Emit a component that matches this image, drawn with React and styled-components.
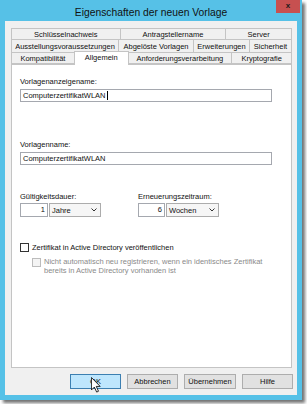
import styled, { createGlobalStyle } from "styled-components";

const GlobalStyle = createGlobalStyle`
  html, body {
    margin: 0;
    padding: 0;
    background: #ffffff;
  }
  body {
    font-family: "Liberation Sans", Arial, sans-serif;
    font-size: 7.5px;
    color: #111;
  }
`;

const Page = styled.div`
  width: 307px;
  height: 404px;
  background: #fff;
`;

const Window = styled.div`
  width: 302px;
  height: 400px;
  background: #56c1e7;
  display: flex;
  flex-direction: column;
  box-shadow: 3px 3px 3px rgba(0, 0, 0, 0.55);
`;

const TitleBar = styled.div`
  height: 21px;
  display: grid;
  grid-template-columns: 26px 1fr 26px;
  align-items: start;
`;

const Title = styled.div`
  grid-column: 2;
  text-align: center;
  font-size: 10.3px;
  line-height: 13px;
  padding-top: 6px;
  color: #111;
`;

const CloseButton = styled.div`
  grid-column: 3;
  width: 24px;
  height: 13px;
  background: #c75050;
  color: #1a1a1a;
  font-weight: bold;
  font-size: 8px;
  line-height: 12px;
  text-align: center;
`;

const Client = styled.div`
  flex: 1;
  margin: 0 5px 5px 5px;
  background: #f0f0f0;
  padding: 7px 5px 0 6px;
  display: flex;
  flex-direction: column;
`;

const TabRows = styled.div`
  display: flex;
  flex-direction: column;
`;

const TabRow = styled.div`
  display: flex;
  height: ${p => p.$h}px;
  align-items: flex-end;
`;

const Tab = styled.div`
  box-sizing: border-box;
  width: ${p => p.$w}px;
  height: ${p => (p.$active ? 14 : p.$h)}px;
  margin-bottom: ${p => (p.$active ? -1 : 0)}px;
  position: ${p => (p.$active ? "relative" : "static")};
  z-index: ${p => (p.$active ? 1 : 0)};
  border: 1px solid #c4c4c4;
  border-bottom: ${p => (p.$active ? "none" : "1px solid #c4c4c4")};
  margin-left: -1px;
  &:first-child { margin-left: 0; }
  background: ${p => (p.$active ? "#ffffff" : "#f0f0f0")};
  display: flex;
  align-items: ${p => (p.$active ? "flex-start" : "center")};
  padding-top: ${p => (p.$active ? 1 : 0)}px;
  justify-content: center;
  white-space: nowrap;
  font-size: 7.5px;
  color: #111;
`;

const Panel = styled.div`
  box-sizing: border-box;
  height: 304px;
  background: #fff;
  border: 1px solid #c4c4c4;
  padding: 12px 0 0 8px;
  display: flex;
  flex-direction: column;
`;

const Label = styled.div`
  line-height: 9px;
  margin-top: ${p => p.$mt || 0}px;
`;

const TextInput = styled.div`
  box-sizing: border-box;
  width: 252px;
  height: 13px;
  margin-top: 3px;
  border: 1px solid #a5a8af;
  background: #fff;
  padding-left: 2px;
  display: flex;
  align-items: center;
`;

const Caret = styled.span`
  display: inline-block;
  width: 1px;
  height: 9px;
  background: #000;
  margin-left: 1px;
`;

const Periods = styled.div`
  display: grid;
  grid-template-columns: 118px auto;
  margin-top: 27px;
`;

const PeriodGroup = styled.div`
  display: flex;
  flex-direction: column;
`;

const PeriodControls = styled.div`
  display: flex;
  gap: 1px;
  margin-top: 2px;
`;

const NumberBox = styled.div`
  box-sizing: border-box;
  width: ${p => p.$w}px;
  height: 14px;
  border: 1px solid #a5a8af;
  background: #fff;
  text-align: right;
  padding-right: 2px;
  line-height: 12px;
`;

const Combo = styled.div`
  box-sizing: border-box;
  width: ${p => p.$w}px;
  height: 14px;
  border: 1px solid #acacac;
  background: #f6f6f6;
  display: flex;
  align-items: center;
  justify-content: space-between;
  padding: 0 3px 0 2px;
`;

const CheckRow = styled.div`
  display: flex;
  align-items: flex-start;
  gap: 3px;
  margin-top: ${p => p.$mt}px;
  margin-left: ${p => p.$ml || 0}px;
  color: ${p => (p.$disabled ? "#8a8a8a" : "#111")};
  line-height: 9px;
`;

const Box = styled.div`
  box-sizing: border-box;
  flex: none;
  width: 9px;
  height: 9px;
  margin-top: ${p => (p.$disabled ? 1 : 0)}px;
  border: 1px solid ${p => (p.$disabled ? "#bcbcbc" : "#333")};
  background: ${p => (p.$disabled ? "#f4f4f4" : "#fff")};
`;

const ButtonBar = styled.div`
  display: flex;
  justify-content: flex-end;
  gap: 6px;
  margin-top: 6px;
  margin-right: -1px;
`;

const Button = styled.div`
  box-sizing: border-box;
  position: relative;
  width: ${p => p.$w || 51}px;
  height: 15px;
  border: 1px solid ${p => (p.$focus ? "#3c7fb1" : "#adadad")};
  background: ${p => (p.$focus ? "#bee6fd" : "#e1e1e1")};
  display: flex;
  align-items: center;
  justify-content: center;
  color: #111;
`;

const Pointer = styled.svg`
  position: absolute;
  left: 20px;
  top: 2px;
`;

const Chevron = () => (
  <svg width="6" height="4" viewBox="0 0 6 4">
    <path d="M0.5 0.5 L3 3 L5.5 0.5" fill="none" stroke="#333" strokeWidth="1" />
  </svg>
);

const rows = [
  { h: 12, tabs: [["Schlüsselnachweis", 110], ["Antragstellername", 107], ["Server", 67]] },
  { h: 13, tabs: [["Ausstellungsvoraussetzungen", 108], ["Abgelöste Vorlagen", 76], ["Erweiterungen", 57], ["Sicherheit", 43]] },
  { h: 11, tabs: [["Kompatibilität", 64], ["Allgemein", 55, true], ["Anforderungsverarbeitung", 105], ["Kryptografie", 61]] },
];

export default function App() {
  return (
    <Page>
      <GlobalStyle />
      <Window>
        <TitleBar>
          <Title>Eigenschaften der neuen Vorlage</Title>
          <CloseButton>x</CloseButton>
        </TitleBar>
        <Client>
          <TabRows>
            {rows.map((row, i) => (
              <TabRow key={i} $h={row.h}>
                {row.tabs.map(([name, w, active]) => (
                  <Tab key={name} $w={w} $h={row.h + (i > 0 ? 1 : 0)} $active={active}>
                    {name}
                  </Tab>
                ))}
              </TabRow>
            ))}
          </TabRows>
          <Panel>
            <Label>Vorlagenanzeigename:</Label>
            <TextInput>
              ComputerzertifikatWLAN<Caret />
            </TextInput>
            <Label $mt={38}>Vorlagenname:</Label>
            <TextInput>ComputerzertifikatWLAN</TextInput>
            <Periods>
              <PeriodGroup>
                <Label>Gültigkeitsdauer:</Label>
                <PeriodControls>
                  <NumberBox $w={28}>1</NumberBox>
                  <Combo $w={52}>
                    Jahre <Chevron />
                  </Combo>
                </PeriodControls>
              </PeriodGroup>
              <PeriodGroup>
                <Label>Erneuerungszeitraum:</Label>
                <PeriodControls>
                  <NumberBox $w={27}>6</NumberBox>
                  <Combo $w={53}>
                    Wochen <Chevron />
                  </Combo>
                </PeriodControls>
              </PeriodGroup>
            </Periods>
            <CheckRow $mt={26}>
              <Box />
              <span>Zertifikat in Active Directory veröffentlichen</span>
            </CheckRow>
            <CheckRow $mt={5} $ml={12} $disabled>
              <Box $disabled />
              <span>
                Nicht automatisch neu registrieren, wenn ein identisches Zertifikat
                <br />
                bereits in Active Directory vorhanden ist
              </span>
            </CheckRow>
          </Panel>
          <ButtonBar>
            <Button $focus>
              OK
              <Pointer width="10" height="16" viewBox="0 0 12 19">
                <path
                  d="M0.5 0.5 L0.5 15.5 L4 12 L6.8 18 L9 17 L6.3 11.2 L11 11.2 Z"
                  fill="#fff"
                  stroke="#000"
                  strokeWidth="1"
                  strokeLinejoin="round"
                />
              </Pointer>
            </Button>
            <Button>Abbrechen</Button>
            <Button $w={52}>Übernehmen</Button>
            <Button>Hilfe</Button>
          </ButtonBar>
        </Client>
      </Window>
    </Page>
  );
}
